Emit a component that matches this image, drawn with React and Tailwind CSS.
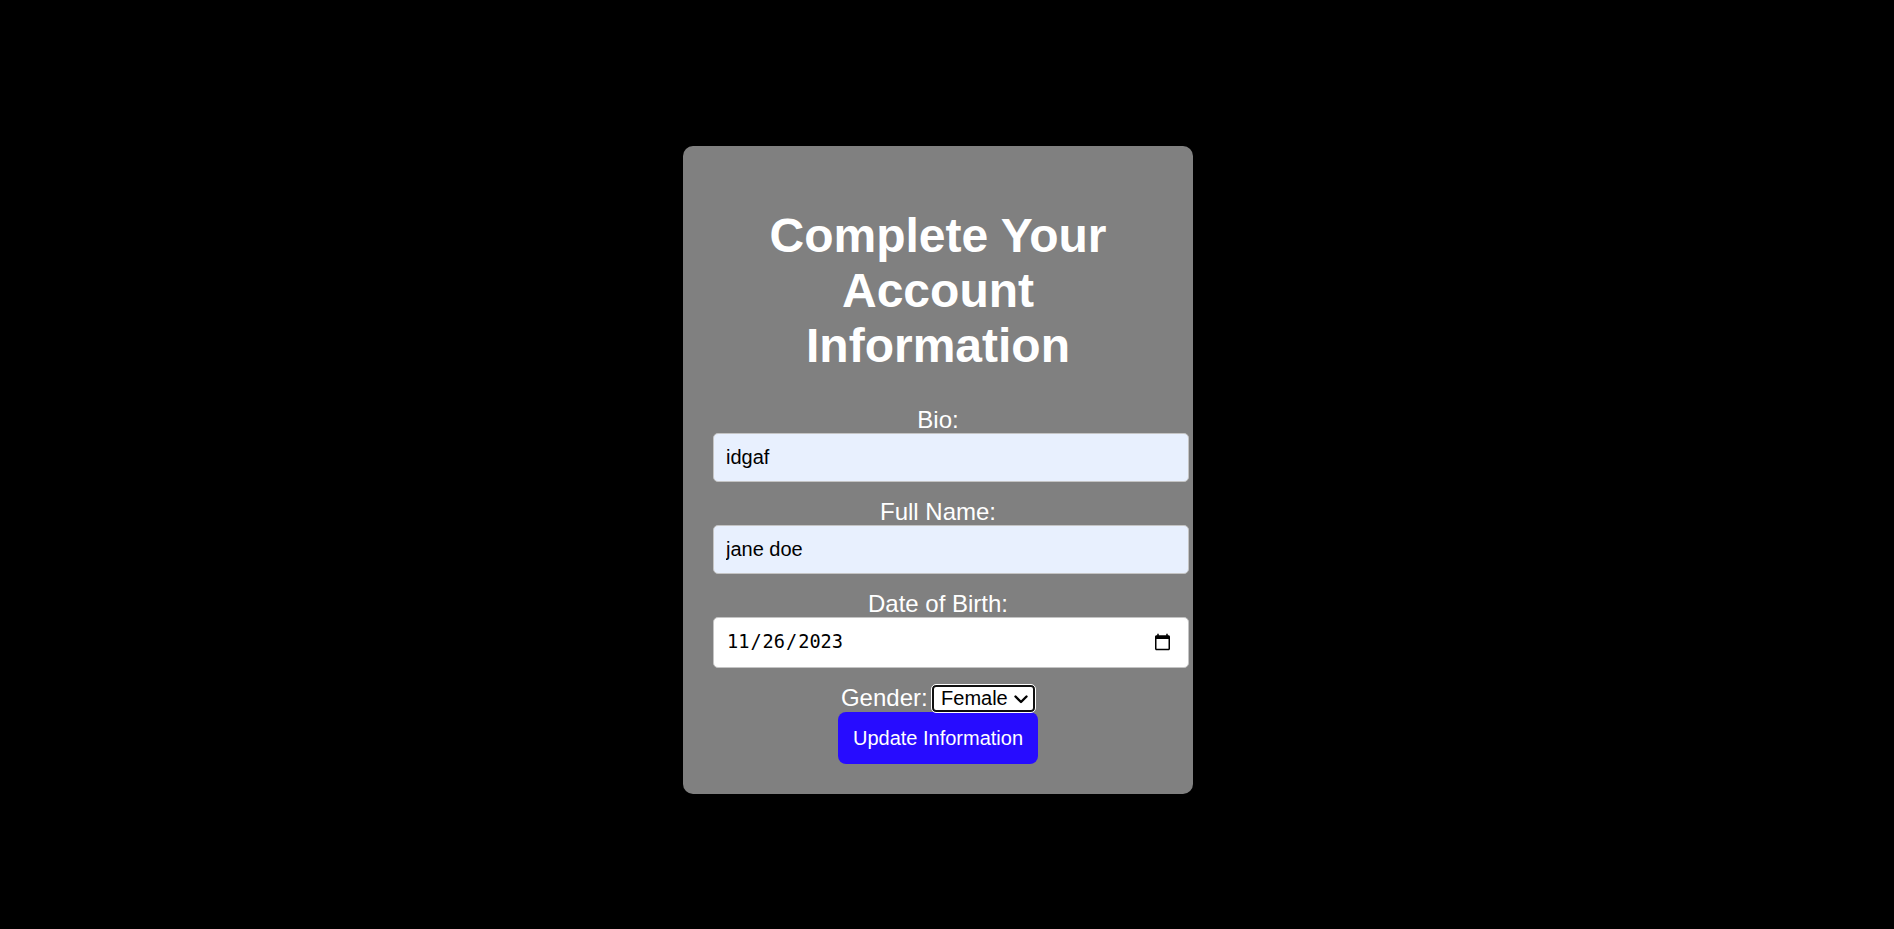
import React from "react";

export default function App() {
  return (
    <div
      className="min-h-screen w-full bg-black flex justify-center items-start pt-[146px]"
      style={{ fontFamily: '"Liberation Sans", Arial, sans-serif' }}
    >
      <div className="mr-[18px] w-[510px] bg-[#808080] rounded-[10px] p-[30px] text-center text-white text-[16px] leading-[18.4px]">
        <h1 className="text-[48px] font-bold leading-[55.2px] my-[32px]">
          Complete Your Account Information
        </h1>
        <form onSubmit={(e) => e.preventDefault()}>
          <label className="block text-[24px] leading-[27.6px]">Bio:</label>
          <input
            type="text"
            defaultValue="idgaf"
            className="block w-[476px] h-[48.4px] mb-[16px] px-[12px] text-[20px] text-black bg-[#e8f0fe] border border-[#c4c4c4] rounded-[5px] outline-none"
          />
          <label className="block text-[24px] leading-[27.6px]">Full Name:</label>
          <input
            type="text"
            defaultValue="jane doe"
            className="block w-[476px] h-[48.4px] mb-[16px] px-[12px] text-[20px] text-black bg-[#e8f0fe] border border-[#c4c4c4] rounded-[5px] outline-none"
          />
          <label className="block text-[24px] leading-[27.6px]">Date of Birth:</label>
          <input
            type="date"
            defaultValue="2023-11-26"
            className="block w-[476px] h-[51px] mb-[16px] pl-[12px] pr-[14px] text-[18.6px] text-black bg-white border border-[#c4c4c4] rounded-[5px] outline-none"
            style={{ fontFamily: '"DejaVu Sans Mono", "Liberation Mono", monospace' }}
          />
          <div className="flex justify-center items-center h-[28px] gap-[4.4px]">
            <label className="text-[24px] leading-[27.6px]">Gender:</label>
            <div className="relative">
              <select
                defaultValue="Female"
                className="appearance-none block w-[103px] h-[27px] pl-[7px] pr-[20px] text-[20px] leading-[23px] text-black bg-white border-2 border-[#101010] rounded-[4px] outline outline-1 outline-white"
              >
                <option>Male</option>
                <option>Female</option>
                <option>Other</option>
              </select>
              <svg
                className="absolute right-[7px] top-[10px] pointer-events-none"
                width="14"
                height="9"
                viewBox="0 0 14 9"
              >
                <path
                  d="M1.5 1.5 L7 7 L12.5 1.5"
                  fill="none"
                  stroke="#000"
                  strokeWidth="2.4"
                  strokeLinecap="round"
                  strokeLinejoin="round"
                />
              </svg>
            </div>
          </div>
          <button
            type="submit"
            className="w-[200px] h-[52px] bg-[#270cff] text-white text-[20px] leading-[23px] rounded-[8px]"
          >
            Update Information
          </button>
        </form>
      </div>
    </div>
  );
}
